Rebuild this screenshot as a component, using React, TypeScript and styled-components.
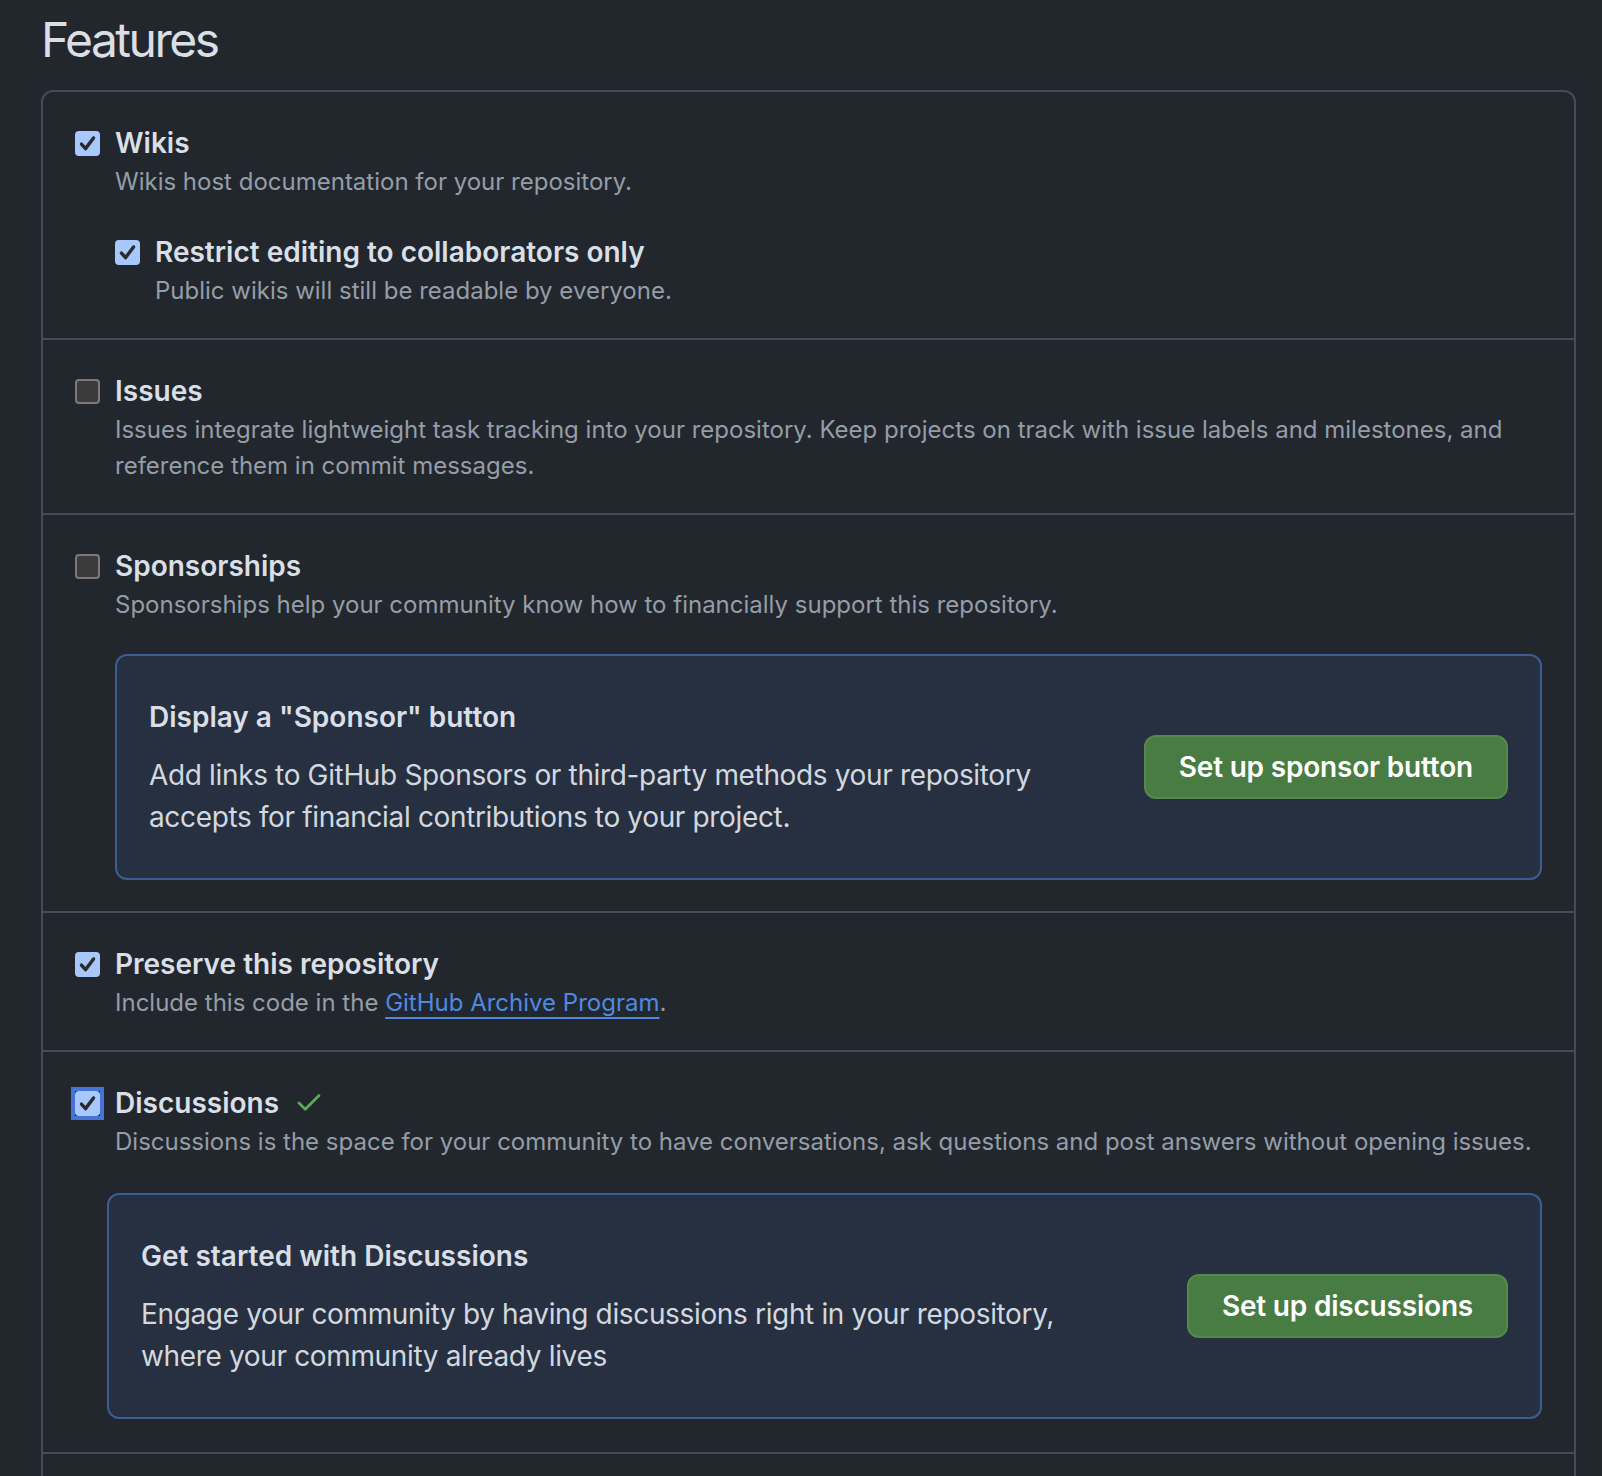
import React from 'react';
import styled, { createGlobalStyle } from 'styled-components';
import { Check } from 'lucide-react';

const Colors = {
    bg: '#22272e',
    border: '#444c56',
    heading: '#dadfe5',
    title: '#d9dfe6',
    muted: '#959da7',
    body: '#d2d8df',
    link: '#4f8ae0',
    calloutBg: '#273041',
    calloutBorder: '#3d5c92',
    green: '#487c42',
    greenBorder: '#538a4c',
    success: '#57ab5a',
    checkFill: '#a8c8fb',
    checkMark: '#2b2b2b',
    boxOff: '#3b3b3b',
    boxOffBorder: '#7a7a7a',
    focus: '#4674d6',
};

const GlobalStyle = createGlobalStyle`
    html, body {
        margin: 0;
        padding: 0;
        background: ${Colors.bg};
    }
    body {
        font-family: Inter, 'Noto Sans', sans-serif;
        -webkit-font-smoothing: antialiased;
    }
`;

function App() {
    return (
        <>
            <GlobalStyle />
            <Page>
                <Heading>Features</Heading>
                <FeatureList>
                    <FeatureRow>
                        <CheckItem checked title="Wikis" desc="Wikis host documentation for your repository." />
                        <SubItem>
                            <CheckItem
                                checked
                                title="Restrict editing to collaborators only"
                                desc="Public wikis will still be readable by everyone."
                            />
                        </SubItem>
                    </FeatureRow>
                    <FeatureRow>
                        <CheckItem
                            title="Issues"
                            desc="Issues integrate lightweight task tracking into your repository. Keep projects on track with issue labels and milestones, and reference them in commit messages."
                        />
                    </FeatureRow>
                    <FeatureRow>
                        <CheckItem
                            title="Sponsorships"
                            desc="Sponsorships help your community know how to financially support this repository."
                        />
                        <Callout $inset={40} $top={31} $bottom={2}>
                            <CalloutText>
                                <CalloutTitle>Display a "Sponsor" button</CalloutTitle>
                                <CalloutBody>
                                    Add links to GitHub Sponsors or third-party methods your repository accepts for
                                    financial contributions to your project.
                                </CalloutBody>
                            </CalloutText>
                            <GreenButton>Set up sponsor button</GreenButton>
                        </Callout>
                    </FeatureRow>
                    <FeatureRow>
                        <CheckItem
                            checked
                            title="Preserve this repository"
                            desc={
                                <>
                                    Include this code in the <Link href="#">GitHub Archive Program</Link>.
                                </>
                            }
                        />
                    </FeatureRow>
                    <FeatureRow>
                        <CheckItem
                            checked
                            focused
                            saved
                            title="Discussions"
                            desc="Discussions is the space for your community to have conversations, ask questions and post answers without opening issues."
                        />
                        <Callout $inset={32} $top={33} $bottom={4}>
                            <CalloutText>
                                <CalloutTitle>Get started with Discussions</CalloutTitle>
                                <CalloutBody>
                                    Engage your community by having discussions right in your repository, where your
                                    community already lives
                                </CalloutBody>
                            </CalloutText>
                            <GreenButton>Set up discussions</GreenButton>
                        </Callout>
                    </FeatureRow>
                    {/* next feature row starts below the fold */}
                    <FeatureRow />
                </FeatureList>
            </Page>
        </>
    );
}

//#region Checkbox item
type CheckItemProps = {
    title: string;
    desc: React.ReactNode;
    checked?: boolean;
    focused?: boolean;
    saved?: boolean;
};

function CheckItem({ title, desc, checked, focused, saved }: CheckItemProps) {
    return (
        <Item>
            <BoxCell>
                <Ring $focused={focused}>
                    <Box role="checkbox" aria-checked={!!checked} $checked={checked}>
                        {checked && (
                            <svg width="21" height="21" viewBox="0 0 16 16" fill="none">
                                <path
                                    d="M3.4 8.4 L6.5 11.9 L12.6 3.8"
                                    stroke={Colors.checkMark}
                                    strokeWidth="2.6"
                                    strokeLinecap="round"
                                    strokeLinejoin="round"
                                />
                            </svg>
                        )}
                    </Box>
                </Ring>
            </BoxCell>
            <ItemText>
                <Title>
                    {title}
                    {saved && (
                        <Saved>
                            <Check size={30} strokeWidth={2.2} color={Colors.success} />
                        </Saved>
                    )}
                </Title>
                <Desc>{desc}</Desc>
            </ItemText>
        </Item>
    );
}

const Item = styled.div`
    display: flex;
    align-items: flex-start;
`;

const BoxCell = styled.div`
    flex: none;
    width: 40px;
    padding-top: 9px;
`;

const Ring = styled.span<{ $focused?: boolean }>`
    display: inline-flex;
    margin: ${(p) => (p.$focused ? '-4px 0 0 -4px' : '0')};
    border: ${(p) => (p.$focused ? `4px solid ${Colors.focus}` : 'none')};
`;

const Box = styled.span<{ $checked?: boolean }>`
    display: flex;
    align-items: center;
    justify-content: center;
    width: 25px;
    height: 25px;
    box-sizing: border-box;
    border-radius: 4px;
    background: ${(p) => (p.$checked ? Colors.checkFill : Colors.boxOff)};
    border: 2px solid ${(p) => (p.$checked ? Colors.checkFill : Colors.boxOffBorder)};
`;

const ItemText = styled.div`
    flex: 1;
    min-width: 0;
`;

const Title = styled.div`
    display: flex;
    align-items: center;
    color: ${Colors.title};
    font-size: 28px;
    font-weight: 600;
    line-height: 42px;
`;

const Saved = styled.span`
    display: inline-flex;
    margin-left: 15px;
`;

const Desc = styled.div`
    color: ${Colors.muted};
    font-size: 24px;
    line-height: 36px;
`;

const Link = styled.a`
    color: ${Colors.link};
    text-decoration: underline;
    text-decoration-thickness: 2px;
    text-underline-offset: 6px;
`;

const SubItem = styled.div`
    margin-top: 31px;
    padding-left: 40px;
`;
//#endregion

//#region Callout
const Callout = styled.div<{ $inset: number; $top: number; $bottom: number }>`
    display: flex;
    align-items: center;
    margin: ${(p) => p.$top}px 0 ${(p) => p.$bottom}px ${(p) => p.$inset}px;
    padding: 40px 32px;
    background: ${Colors.calloutBg};
    border: 2px solid ${Colors.calloutBorder};
    border-radius: 12px;
`;

const CalloutText = styled.div`
    flex: 1;
    padding-right: 80px;
`;

const CalloutTitle = styled.div`
    color: ${Colors.title};
    font-size: 28px;
    font-weight: 600;
    line-height: 42px;
    margin-bottom: 16px;
`;

const CalloutBody = styled.div`
    color: ${Colors.body};
    font-size: 28px;
    line-height: 42px;
    letter-spacing: -0.35px;
`;

const GreenButton = styled.button`
    flex: none;
    height: 64px;
    padding: 0 33px;
    border-radius: 12px;
    border: 2px solid ${Colors.greenBorder};
    background: ${Colors.green};
    color: #ffffff;
    font-family: inherit;
    font-size: 28px;
    font-weight: 600;
    letter-spacing: -0.2px;
    cursor: pointer;
`;
//#endregion

//#region Layout
const Page = styled.div`
    padding: 10px 26px 0 41px;
`;

const Heading = styled.h2`
    margin: 0 0 20px;
    color: ${Colors.heading};
    font-size: 48px;
    font-weight: 400;
    line-height: 60px;
    letter-spacing: -2.5px;
`;

const FeatureList = styled.div`
    border: 2px solid ${Colors.border};
    border-radius: 12px;
`;

const FeatureRow = styled.div`
    min-height: 42px;
    padding: 30px 32px 29px;

    & + & {
        border-top: 2px solid ${Colors.border};
    }
`;
//#endregion

export default App;
